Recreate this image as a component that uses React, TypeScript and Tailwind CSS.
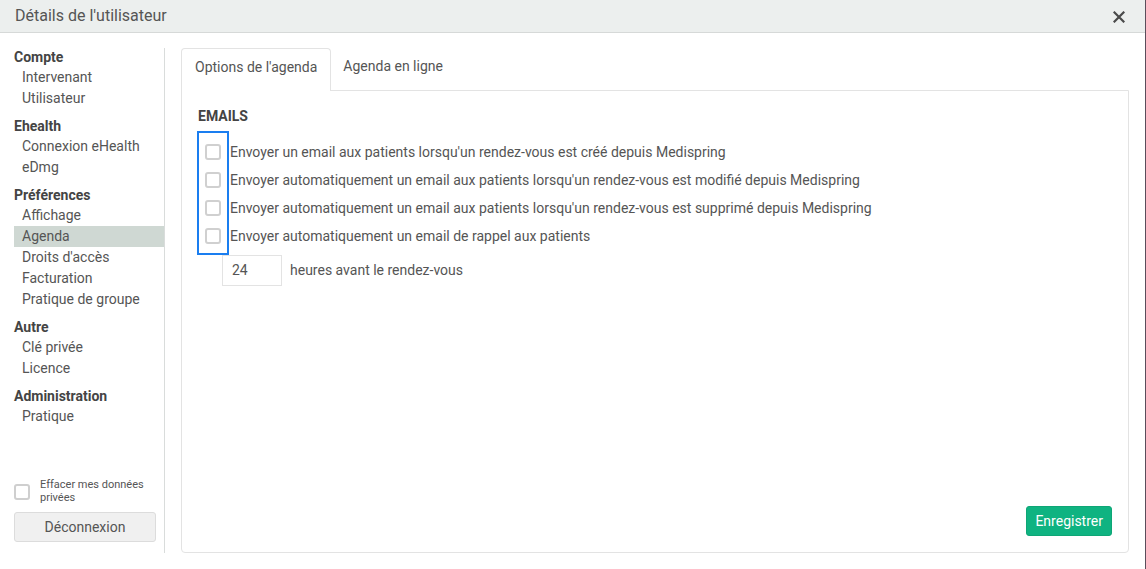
import React from "react";

const groups: { title: string; items: string[] }[] = [
  { title: "Compte", items: ["Intervenant", "Utilisateur"] },
  { title: "Ehealth", items: ["Connexion eHealth", "eDmg"] },
  {
    title: "Préférences",
    items: ["Affichage", "Agenda", "Droits d'accès", "Facturation", "Pratique de groupe"],
  },
  { title: "Autre", items: ["Clé privée", "Licence"] },
  { title: "Administration", items: ["Pratique"] },
];

const rows = [
  "Envoyer un email aux patients lorsqu'un rendez-vous est créé depuis Medispring",
  "Envoyer automatiquement un email aux patients lorsqu'un rendez-vous est modifié depuis Medispring",
  "Envoyer automatiquement un email aux patients lorsqu'un rendez-vous est supprimé depuis Medispring",
  "Envoyer automatiquement un email de rappel aux patients",
];

function Box() {
  return (
    <span className="block w-[16px] h-[16px] rounded-[3px] border-2 border-[#d0d0d0] bg-white" />
  );
}

export default function App() {
  return (
    <div
      className="w-[1146px] h-[569px] flex bg-white text-[#555]"
      style={{ fontFamily: "Roboto, 'Liberation Sans', sans-serif" }}
    >
      <div className="flex-1 flex flex-col">
        {/* Header */}
        <div className="h-[33px] flex items-center justify-between bg-[#ecefee] border-b border-[#d6d9d8] pl-[15px] pr-[20px]">
          <span className="text-[16px] text-[#555]">Détails de l'utilisateur</span>
          <svg width="12" height="12" viewBox="0 0 12 12" className="mt-[1px]">
            <path d="M1.5 1.5 L10.5 10.5 M10.5 1.5 L1.5 10.5" stroke="#4a4a4a" strokeWidth="2.2" strokeLinecap="square" />
          </svg>
        </div>

        {/* Body */}
        <div className="flex-1 flex pt-[15px] pb-[16px]">
          {/* Sidebar */}
          <div className="w-[165px] border-r border-[#d9dcdb] flex flex-col justify-between pl-[14px] pb-[11px]">
            <div className="flex flex-col gap-[7px] -mt-[1px]">
              {groups.map((g) => (
                <div key={g.title} className="flex flex-col">
                  <div className="h-[20px] leading-[20px] text-[14px] font-bold text-[#444]">{g.title}</div>
                  {g.items.map((it) => (
                    <div
                      key={it}
                      className={
                        "h-[21px] leading-[21px] text-[14px] pl-[8px] text-[#555] " +
                        (it === "Agenda" ? "bg-[#cfd8d3]" : "")
                      }
                    >
                      {it}
                    </div>
                  ))}
                </div>
              ))}
            </div>
            <div className="flex flex-col pr-[8px]">
              <div className="flex items-center gap-[10px]">
                <span className="block w-[16px] h-[16px] rounded-[3px] border-2 border-[#cfcfcf] shrink-0 mt-[1px]" />
                <span className="text-[11px] leading-[13px] text-[#555]">
                  Effacer mes données
                  <br />
                  privées
                </span>
              </div>
              <button className="mt-[8px] h-[30px] w-[142px] bg-[#f0f0f0] border border-[#dcdcdc] rounded-[3px] text-[14px] text-[#555]">
                Déconnexion
              </button>
            </div>
          </div>

          {/* Main */}
          <div className="flex-1 flex flex-col pl-[16px] pr-[16px]">
            <div className="h-[42px] flex items-stretch">
              <div className="relative z-10 h-[43px] px-[13px] pt-[8px] leading-[20px] text-[14px] text-[#555] bg-white border border-b-0 border-[#e3e3e3] rounded-t-[4px]">
                Options de l'agenda
              </div>
              <div className="px-[12px] pt-[8px] leading-[20px] text-[14px] text-[#555]">Agenda en ligne</div>
            </div>
            <div className="flex-1 border border-[#e3e3e3] rounded-b-[4px] flex flex-col pl-[15px] pr-[16px] pt-[15px] pb-[16px]">
              <div className="h-[20px] leading-[20px] text-[14px] font-bold text-[#444] pl-[1px]">EMAILS</div>
              <div className="mt-[5px] flex">
                <div className="w-[32px] border-2 border-[#1a7ef0] pt-[5px] pb-[3px] flex flex-col">
                  {rows.map((r) => (
                    <div key={r} className="h-[28px] flex items-center justify-center">
                      <Box />
                    </div>
                  ))}
                </div>
                <div className="pt-[7px] flex flex-col">
                  {rows.map((r) => (
                    <div key={r} className="h-[28px] flex items-center text-[14px] text-[#555] pl-[1px]">
                      {r}
                    </div>
                  ))}
                </div>
              </div>
              <div className="ml-[25px] flex items-center gap-[8px]">
                <div className="w-[60px] h-[31px] border border-[#e3e3e3] flex items-center pl-[9px] text-[14px] text-[#555]">
                  24
                </div>
                <span className="text-[14px] text-[#555]">heures avant le rendez-vous</span>
              </div>
              <div className="mt-auto flex justify-end">
                <button className="h-[30px] px-[8px] bg-[#0fb381] text-white text-[14px] rounded-[3px] border border-[#0ea676]">
                  Enregistrer
                </button>
              </div>
            </div>
          </div>
        </div>
      </div>
      <div className="w-[1px] bg-[#5b4e5b]" />
    </div>
  );
}
